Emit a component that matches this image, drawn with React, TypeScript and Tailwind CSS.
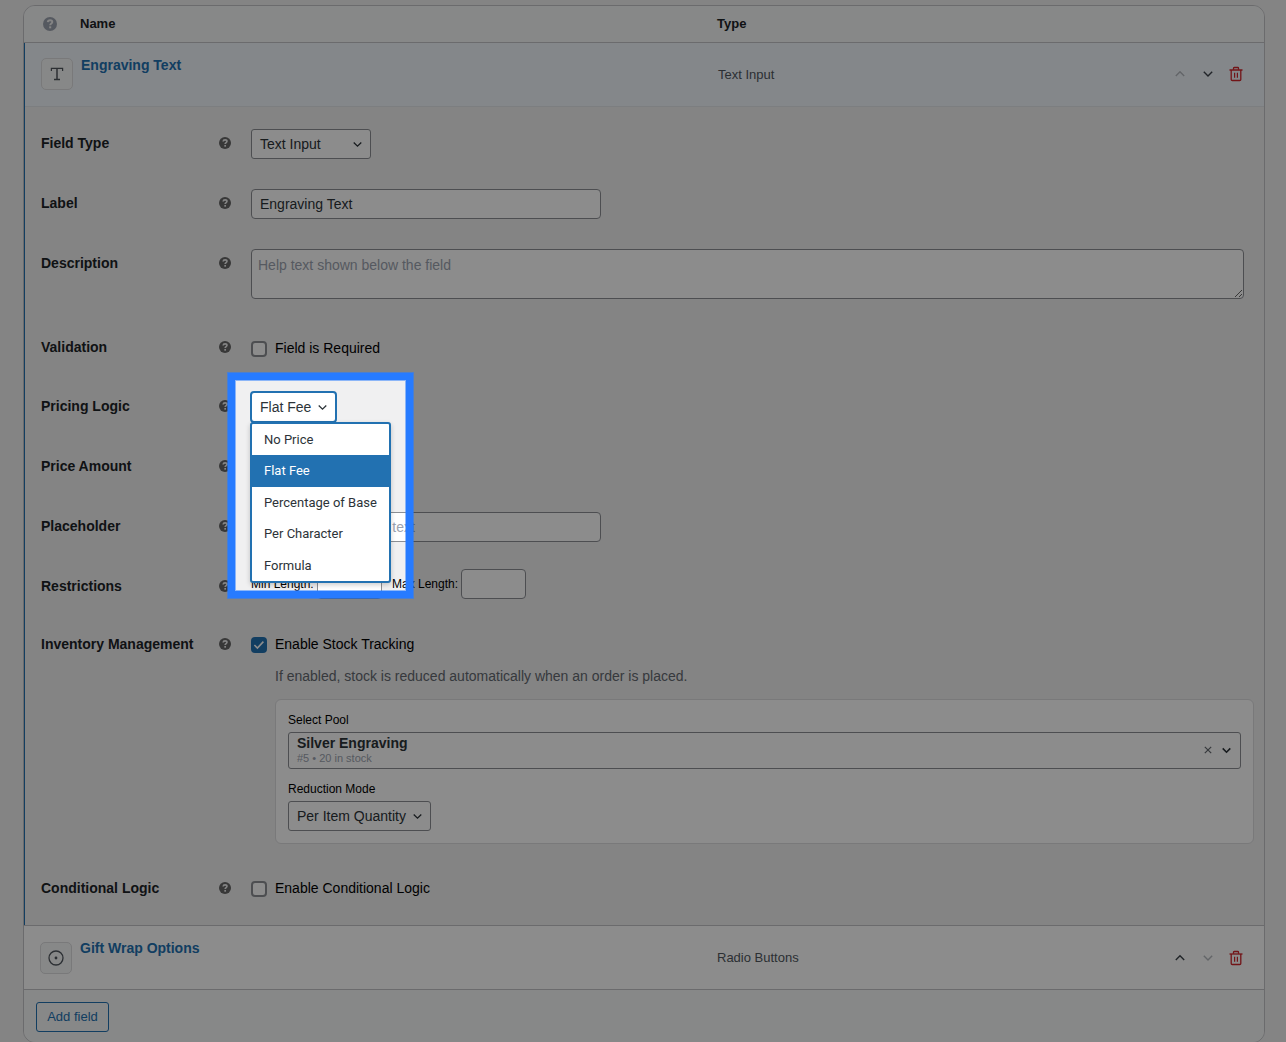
import type { ReactNode } from "react";

function Help({ size = 12, className = "" }: { size?: number; className?: string }) {
  return (
    <svg width={size} height={size} viewBox="0 0 14 14" className={className}>
      <circle cx="7" cy="7" r="7" fill="currentColor" />
      <path
        d="M4.8 5.2C4.9 4 5.8 3.3 7.1 3.3c1.3 0 2.2.7 2.2 1.8 0 1.5-2.1 1.5-2.1 3.1"
        fill="none"
        stroke="#f0f0f1"
        strokeWidth="1.9"
      />
      <rect x="6.2" y="9.3" width="2" height="2" fill="#f0f0f1" />
    </svg>
  );
}

function Chevron({
  up = false,
  size = 10,
  width = 1.4,
  className = "",
}: {
  up?: boolean;
  size?: number;
  width?: number;
  className?: string;
}) {
  return (
    <svg width={size} height={size} viewBox="0 0 10 10" className={className}>
      <path
        d={up ? "M.8 6.9 5 2.7 9.2 6.9" : "M.8 2.7 5 6.9 9.2 2.7"}
        fill="none"
        stroke="currentColor"
        strokeWidth={width}
      />
    </svg>
  );
}

function Trash() {
  return (
    <svg width="14" height="16" viewBox="0 0 14 16" fill="none" stroke="#d0252b">
      <path d="M.5 4h13" strokeWidth="1.3" />
      <path d="M4.5 3.8V2.2q0-.7.7-.7h3.6q.7 0 .7.7v1.6" strokeWidth="1.3" />
      <path d="M2.2 4v9.4q0 1.1 1.1 1.1h7.4q1.1 0 1.1-1.1V4" strokeWidth="1.3" />
      <path d="M5.6 6.8v5M8.4 6.8v5" strokeWidth="1.2" />
    </svg>
  );
}

function RowActions({ first = false }: { first?: boolean }) {
  return (
    <div className={`ml-auto flex items-center self-center pr-5 ${first ? "pb-px" : ""}`}>
      <div className="flex w-7 justify-center">
        <Chevron up className={first ? "text-[#b4b9be]" : "text-[#3c434a]"} />
      </div>
      <div className="flex w-7 justify-center">
        <Chevron className={first ? "text-[#3c434a]" : "text-[#b4b9be]"} />
      </div>
      <div className="-mr-[6px] flex w-7 justify-center">
        <Trash />
      </div>
    </div>
  );
}

function TypeBadge({ className, children }: { className: string; children: ReactNode }) {
  return (
    <div
      className={`flex h-8 w-8 shrink-0 items-center justify-center rounded-[5px] border border-[#dcdcde] bg-[#f6f7f7] text-[#50575e] ${className}`}
    >
      {children}
    </div>
  );
}

function FieldRow({
  label,
  height,
  shift = "",
  children,
}: {
  label: string;
  height: string;
  shift?: string;
  children?: ReactNode;
}) {
  return (
    <div className={`flex ${height}`}>
      <div className="mt-1 h-5 w-[178px] shrink-0 text-[14px] leading-5 font-bold text-[#1d2327]">
        {label}
      </div>
      <Help className="mt-[7.5px] mr-5 shrink-0 text-[#666]" />
      <div className={`min-w-0 flex-1 ${shift}`}>{children}</div>
    </div>
  );
}

function SelectBox({ value, className }: { value: string; className: string }) {
  return (
    <div
      className={`flex h-[30px] items-center justify-between rounded-[3px] border border-[#8c8f94] bg-white pr-[8.5px] pl-2 text-[14px] text-[#2c3338] ${className}`}
    >
      {value}
      <Chevron size={9} />
    </div>
  );
}

function Checkbox({ checked = false, label }: { checked?: boolean; label: string }) {
  return (
    <label className="flex h-5 items-center gap-2 text-[14px] text-black">
      <span
        className={`mt-[2px] flex h-4 w-4 items-center justify-center rounded-[4px] ${
          checked ? "bg-[#2271b1]" : "border-2 border-[#8c8f94] bg-white"
        }`}
      >
        {checked && (
          <svg width="12" height="12" viewBox="0 0 12 12">
            <path d="M1.4 6 4.4 9 10.4 2.6" fill="none" stroke="#fff" strokeWidth="1.6" />
          </svg>
        )}
      </span>
      {label}
    </label>
  );
}

const OPTIONS = ["No Price", "Flat Fee", "Percentage of Base", "Per Character", "Formula"];

function PricingSelect() {
  return (
    <div className="relative -ml-px w-[87px]">
      <div className="flex h-8 items-center justify-between rounded-[4px] border-2 border-[#2271b1] bg-white pr-[8.5px] pl-2 text-[14px] text-[#2c3338]">
        Flat Fee
        <Chevron size={9} />
      </div>
      <div className="absolute top-[31px] left-0 z-10 h-[161px] w-[141px] rounded-[3px] border-2 border-[#2271b1] bg-white font-[Roboto,sans-serif] text-[13px] shadow-[0_2px_5px_rgba(0,0,0,0.2)]">
        {OPTIONS.map((option) => (
          <div
            key={option}
            className={`flex h-[31.4px] items-center pl-3 whitespace-nowrap ${
              option === "Flat Fee" ? "bg-[#2271b1] text-white" : "text-[#2c3338]"
            }`}
          >
            {option}
          </div>
        ))}
      </div>
    </div>
  );
}

export default function App() {
  return (
    <div className="relative h-[1042px] w-[1286px] overflow-hidden bg-[#f0f0f1] pt-[5px] pl-[23px] font-['Liberation_Sans',Arial,sans-serif]">
      <div className="h-[1038px] w-[1242px] overflow-hidden rounded-[12px] border border-[#c3c4c7]">
        <div className="flex h-[37px] items-center border-b border-[#c3c4c7] bg-[#f6f7f7] pl-[19px] text-[13px] font-bold text-[#1d2327]">
          <Help size={14} className="mr-[23px] text-[#9ca3af]" />
          <span className="w-[637px]">Name</span>
          <span>Type</span>
        </div>

        <div className="border-l border-[#2271b1]">
          <div className="flex h-16 border-b border-[#e2e6ea] bg-[#f0f6fc] pl-4">
            <TypeBadge className="mt-[15px]">
              <svg width="14" height="14" viewBox="0 0 14 14" fill="none" stroke="currentColor">
                <path d="M1.4 4V1.4h11.2V4" strokeWidth="1.2" />
                <path d="M7 1.4v11.2M4 12.5h6" strokeWidth="1.5" />
              </svg>
            </TypeBadge>
            <div className="mt-3 ml-2 w-[637px] text-[14px] leading-5 font-bold text-[#2271b1]">
              Engraving Text
            </div>
            <div className="self-center text-[13px] text-[#50575e]">Text Input</div>
            <RowActions first />
          </div>

          <div className="h-[818px] pt-[22px] pr-5 pl-4">
            <FieldRow label="Field Type" height="h-[60px]">
              <SelectBox value="Text Input" className="w-[120px]" />
            </FieldRow>
            <FieldRow label="Label" height="h-[60px]">
              <input
                readOnly
                value="Engraving Text"
                className="block h-[30px] w-[350px] rounded-[4px] border border-[#8c8f94] bg-white px-2 text-[14px] text-[#2c3338]"
              />
            </FieldRow>
            <FieldRow label="Description" height="h-[84px]">
              <textarea
                readOnly
                placeholder="Help text shown below the field"
                className="block h-[50px] w-[993px] rounded-[4px] border border-[#8c8f94] bg-white px-[6px] py-[5px] text-[14px] leading-5 placeholder:text-[#9ca3af]"
              />
            </FieldRow>
            <FieldRow label="Validation" height="h-[59px]" shift="pt-[5px]">
              <Checkbox label="Field is Required" />
            </FieldRow>
            <FieldRow label="Pricing Logic" height="h-[60px]" shift="-mt-px">
              <PricingSelect />
            </FieldRow>
            <FieldRow label="Price Amount" height="h-[60px]">
              <input
                readOnly
                value="10"
                className="block h-[30px] w-[100px] rounded-[4px] border border-[#8c8f94] bg-white px-2 text-[14px] text-[#2c3338]"
              />
            </FieldRow>
            <FieldRow label="Placeholder" height="h-[60px]">
              <input
                readOnly
                placeholder="Optional placeholder text"
                className="block h-[30px] w-[350px] rounded-[4px] border border-[#8c8f94] bg-white px-2 text-[14px] placeholder:text-[#9ca3af]"
              />
            </FieldRow>
            <FieldRow label="Restrictions" height="h-[58px]" shift="-mt-[3px]">
              <div className="flex items-center text-[12px] text-black">
                <span className="w-[66px]">Min Length:</span>
                <span className="h-[30px] w-[65px] rounded-[4px] border border-[#8c8f94] bg-white" />
                <span className="ml-[10px] w-[69px]">Max Length:</span>
                <span className="h-[30px] w-[65px] rounded-[4px] border border-[#8c8f94] bg-white" />
              </div>
            </FieldRow>
            <FieldRow label="Inventory Management" height="h-[244px]" shift="pt-1">
              <Checkbox checked label="Enable Stock Tracking" />
              <p className="mt-3 ml-6 text-[14px] leading-5 text-[#646970]">
                If enabled, stock is reduced automatically when an order is placed.
              </p>
              <div className="mt-[13px] ml-6 h-[145px] w-[979px] rounded-[6px] border border-[#dcdcde] bg-white px-3 pt-3 text-[12px] text-black">
                <div className="h-5 leading-4">Select Pool</div>
                <div className="flex h-[37px] items-center rounded-[3px] border border-[#8c8f94] pr-[9px] pb-px pl-2">
                  <div className="-mt-px">
                    <div className="text-[14px] leading-4 font-bold text-[#2c3338]">
                      Silver Engraving
                    </div>
                    <div className="text-[11px] leading-[14px] text-[#9ca3af]">
                      #5 • 20 in stock
                    </div>
                  </div>
                  <svg width="8" height="8" viewBox="0 0 8 8" className="mr-[10px] ml-auto">
                    <path d="m.8.8 6.4 6.4M7.2.8.8 7.2" stroke="#646970" strokeWidth="1.2" />
                  </svg>
                  <Chevron size={9} width={1.8} className="text-[#2c3338]" />
                </div>
                <div className="mt-3 h-5 leading-4">Reduction Mode</div>
                <SelectBox value="Per Item Quantity" className="w-[143px]" />
              </div>
            </FieldRow>
            <FieldRow label="Conditional Logic" height="h-[50px]" shift="pt-1">
              <Checkbox label="Enable Conditional Logic" />
            </FieldRow>
          </div>
        </div>

        <div className="flex h-[65px] border-y border-[#c3c4c7] bg-white pl-4">
          <TypeBadge className="mt-4">
            <svg width="16" height="16" viewBox="0 0 16 16">
              <circle cx="8" cy="8" r="7" fill="none" stroke="currentColor" strokeWidth="1.3" />
              <circle cx="8" cy="8" r="1.4" fill="currentColor" />
            </svg>
          </TypeBadge>
          <div className="mt-3 ml-2 w-[637px] text-[14px] leading-5 font-bold text-[#2271b1]">
            Gift Wrap Options
          </div>
          <div className="self-center text-[13px] text-[#50575e]">Radio Buttons</div>
          <RowActions />
        </div>

        <div className="h-[53px] bg-[#f6f7f7] pt-3 pl-3">
          <button
            type="button"
            className="block h-[30px] w-[73px] rounded-[3px] border border-[#2271b1] text-[13px] text-[#2271b1]"
          >
            Add field
          </button>
        </div>
      </div>

      {/* spotlight: everything outside the frame is dimmed */}
      <div className="pointer-events-none absolute top-[373px] left-[228px] z-20 h-[225px] w-[185px] border-7 border-[#277bff] shadow-[0_0_0_1px_rgba(39,123,255,0.6),0_0_0_1400px_rgba(0,0,0,0.45),inset_0_0_0_1px_rgba(39,123,255,0.5)]" />
    </div>
  );
}
